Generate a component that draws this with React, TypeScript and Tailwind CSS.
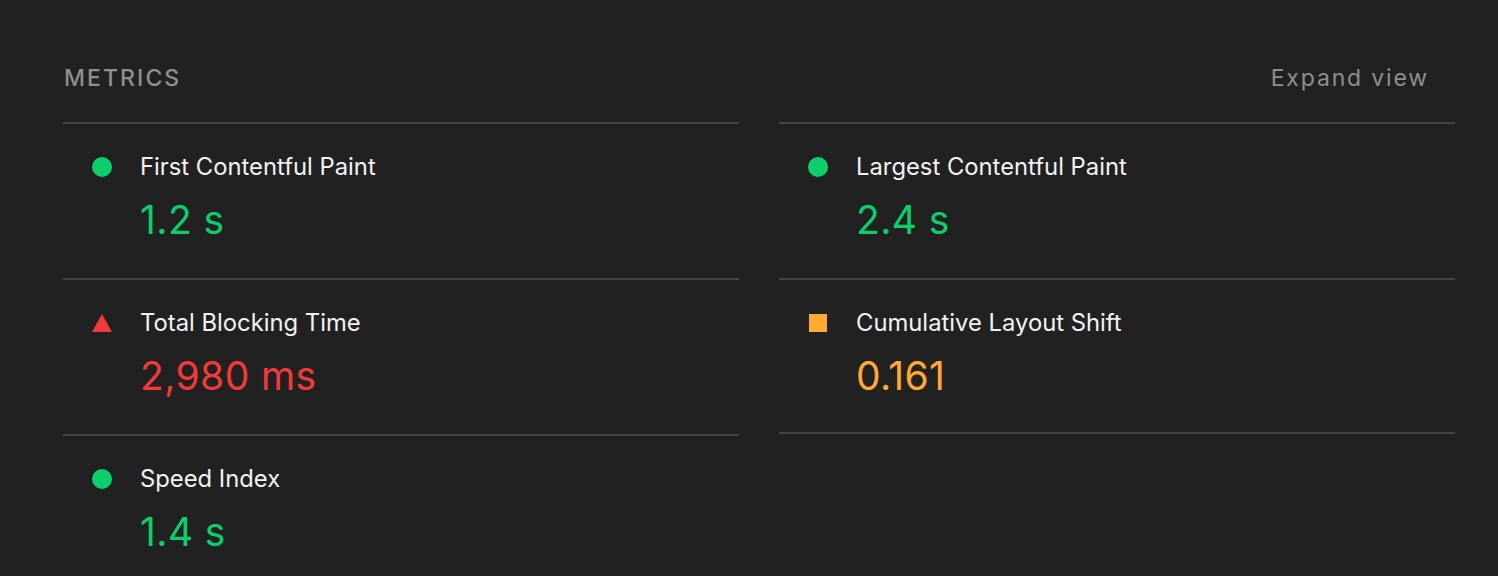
import type { ReactNode } from 'react';

type Status = 'pass' | 'average' | 'fail';

type Metric = {
  label: string;
  value: string;
  status: Status;
  className?: string;
};

const valueColor: Record<Status, string> = {
  pass: 'text-[#0cce6b]',
  average: 'text-[#ffa933]',
  fail: 'text-[#f33a3a]',
};

function StatusIcon({ status }: { status: Status }) {
  if (status === 'fail') {
    return (
      <svg width="20" height="20" viewBox="0 0 20 20" className="block">
        <polygon points="10,1 20,19 0,19" fill="#f33a3a" />
      </svg>
    );
  }
  if (status === 'average') {
    return <div className="ml-[1px] h-[18px] w-[18px] bg-[#ffaa33]" />;
  }
  return <div className="h-[20px] w-[20px] rounded-full bg-[#0cce6b]" />;
}

function MetricRow({ label, value, status, className }: Metric) {
  return (
    <div className={`border-t-2 border-[#434343] pt-[29px] ${className ?? 'pb-[36px]'}`}>
      <div className="flex h-[28px] items-center">
        <div className="flex w-[77px] justify-center">
          <StatusIcon status={status} />
        </div>
        <span className="text-[23.8px] leading-[28px] text-[#f2f2f2]">{label}</span>
      </div>
      <div
        className={`mt-[17px] pl-[77px] text-[39px] leading-[44px] tracking-[0.01em] ${valueColor[status]}`}
      >
        {value}
      </div>
    </div>
  );
}

function Column({ children }: { children: ReactNode }) {
  return <div className="flex flex-col">{children}</div>;
}

export default function App() {
  const left: Metric[] = [
    { label: 'First Contentful Paint', value: '1.2 s', status: 'pass' },
    { label: 'Total Blocking Time', value: '2,980 ms', status: 'fail' },
    { label: 'Speed Index', value: '1.4 s', status: 'pass' },
  ];
  const right: Metric[] = [
    { label: 'Largest Contentful Paint', value: '2.4 s', status: 'pass' },
    {
      label: 'Cumulative Layout Shift',
      value: '0.161',
      status: 'average',
      className: 'pb-[34px] border-b-2',
    },
  ];

  return (
    <div
      className="h-[576px] w-full overflow-hidden bg-[#212121] pl-[63px] pr-[43px] pt-[64px]"
      style={{ fontFamily: 'Inter, "Noto Sans", sans-serif' }}
    >
      <div className="mb-[30px] flex h-[28px] items-center justify-between pr-[26px]">
        <span className="pl-[1px] text-[23px] font-medium tracking-[0.09em] text-[#8f8f8f]">
          METRICS
        </span>
        <span className="text-[23px] tracking-[0.08em] text-[#8f8f8f]">Expand view</span>
      </div>
      <div className="grid grid-cols-2 gap-x-[40px]">
        <Column>
          {left.map((m) => (
            <MetricRow key={m.label} {...m} />
          ))}
        </Column>
        <Column>
          {right.map((m) => (
            <MetricRow key={m.label} {...m} />
          ))}
        </Column>
      </div>
    </div>
  );
}
